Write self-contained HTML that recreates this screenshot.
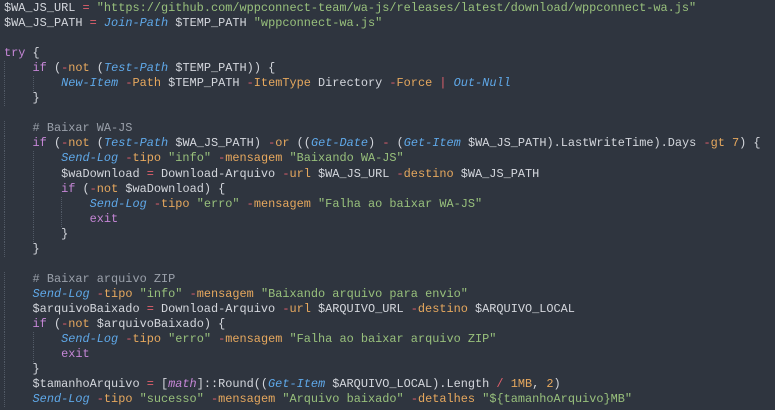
<!DOCTYPE html>
<html><head><meta charset="utf-8"><style>
html,body{margin:0;padding:0;background:#2f353f;width:775px;height:410px;overflow:hidden}
pre{margin:0;padding:1px 0 0 4px;font-family:"Liberation Mono",monospace;font-size:11.9px;line-height:15.04px;color:#d4d7dd;white-space:pre}
.s{color:#98c07c}.o{color:#e0606c}.k{color:#c586d6}.c{font-style:italic;color:#5fa8e8}.p{color:#e6a85e}.m{color:#9aa0aa}.n{color:#e6a85e}.t{font-style:italic;color:#c586d6}
.g{display:inline-block;width:28.56px;background:linear-gradient(#525a66 50%,transparent 50%) 0 0/1px 2px repeat-y}
</style></head><body><pre>$WA_JS_URL <span class="o">=</span> <span class="s">"https://github.com/wppconnect-team/wa-js/releases/latest/download/wppconnect-wa.js"</span>
$WA_JS_PATH <span class="o">=</span> <span class="c">Join-Path</span> $TEMP_PATH <span class="s">"wppconnect-wa.js"</span>

<span class="k">try</span> {
<span class="g"> </span><span class="k">if</span> (<span class="o">-</span><span class="p">not</span> (<span class="c">Test-Path</span> $TEMP_PATH)) {
<span class="g"> </span><span class="g"> </span><span class="c">New-Item</span> <span class="o">-</span><span class="p">Path</span> $TEMP_PATH <span class="o">-</span><span class="p">ItemType</span> Directory <span class="o">-</span><span class="p">Force</span> <span class="o">|</span> <span class="c">Out-Null</span>
<span class="g"> </span>}

<span class="g"> </span><span class="m"># Baixar WA-JS</span>
<span class="g"> </span><span class="k">if</span> (<span class="o">-</span><span class="p">not</span> (<span class="c">Test-Path</span> $WA_JS_PATH) <span class="o">-</span><span class="p">or</span> ((<span class="c">Get-Date</span>) <span class="o">-</span> (<span class="c">Get-Item</span> $WA_JS_PATH).LastWriteTime).Days <span class="o">-</span><span class="p">gt</span> <span class="n">7</span>) {
<span class="g"> </span><span class="g"> </span><span class="c">Send-Log</span> <span class="o">-</span><span class="p">tipo</span> <span class="s">"info"</span> <span class="o">-</span><span class="p">mensagem</span> <span class="s">"Baixando WA-JS"</span>
<span class="g"> </span><span class="g"> </span>$waDownload <span class="o">=</span> Download-Arquivo <span class="o">-</span><span class="p">url</span> $WA_JS_URL <span class="o">-</span><span class="p">destino</span> $WA_JS_PATH
<span class="g"> </span><span class="g"> </span><span class="k">if</span> (<span class="o">-</span><span class="p">not</span> $waDownload) {
<span class="g"> </span><span class="g"> </span><span class="g"> </span><span class="c">Send-Log</span> <span class="o">-</span><span class="p">tipo</span> <span class="s">"erro"</span> <span class="o">-</span><span class="p">mensagem</span> <span class="s">"Falha ao baixar WA-JS"</span>
<span class="g"> </span><span class="g"> </span><span class="g"> </span><span class="k">exit</span>
<span class="g"> </span><span class="g"> </span>}
<span class="g"> </span>}

<span class="g"> </span><span class="m"># Baixar arquivo ZIP</span>
<span class="g"> </span><span class="c">Send-Log</span> <span class="o">-</span><span class="p">tipo</span> <span class="s">"info"</span> <span class="o">-</span><span class="p">mensagem</span> <span class="s">"Baixando arquivo para envio"</span>
<span class="g"> </span>$arquivoBaixado <span class="o">=</span> Download-Arquivo <span class="o">-</span><span class="p">url</span> $ARQUIVO_URL <span class="o">-</span><span class="p">destino</span> $ARQUIVO_LOCAL
<span class="g"> </span><span class="k">if</span> (<span class="o">-</span><span class="p">not</span> $arquivoBaixado) {
<span class="g"> </span><span class="g"> </span><span class="c">Send-Log</span> <span class="o">-</span><span class="p">tipo</span> <span class="s">"erro"</span> <span class="o">-</span><span class="p">mensagem</span> <span class="s">"Falha ao baixar arquivo ZIP"</span>
<span class="g"> </span><span class="g"> </span><span class="k">exit</span>
<span class="g"> </span>}
<span class="g"> </span>$tamanhoArquivo <span class="o">=</span> [<span class="t">math</span>]::Round((<span class="c">Get-Item</span> $ARQUIVO_LOCAL).Length <span class="o">/</span> <span class="n">1MB</span>, <span class="n">2</span>)
<span class="g"> </span><span class="c">Send-Log</span> <span class="o">-</span><span class="p">tipo</span> <span class="s">"sucesso"</span> <span class="o">-</span><span class="p">mensagem</span> <span class="s">"Arquivo baixado"</span> <span class="o">-</span><span class="p">detalhes</span> <span class="s">"${tamanhoArquivo}MB"</span></pre></body></html>
